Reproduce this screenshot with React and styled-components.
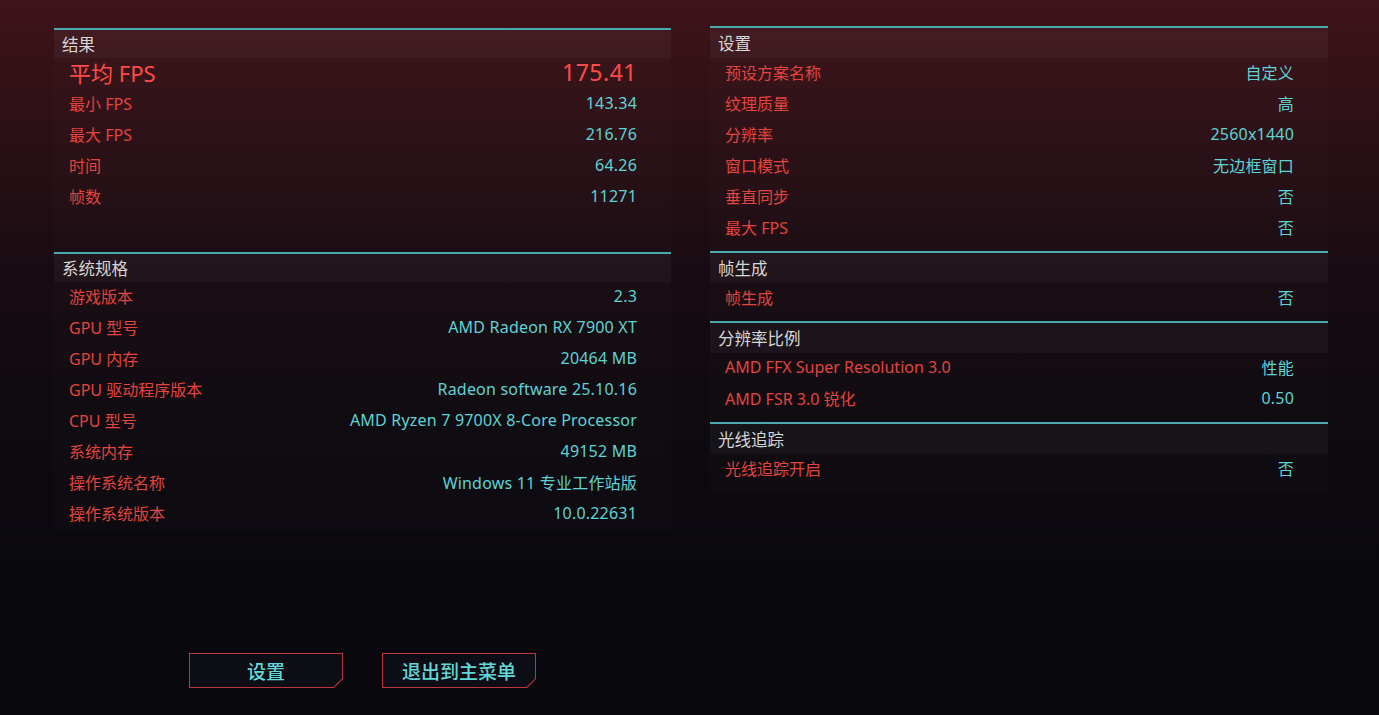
import React from "react";
import styled, { createGlobalStyle } from "styled-components";

const GlobalStyle = createGlobalStyle`
  html, body {
    margin: 0;
    padding: 0;
    background: #08080d;
  }
  body {
    font-family: "Noto Sans", "Noto Sans CJK SC", sans-serif;
  }
`;

const results = [
  { label: "最小 FPS", value: "143.34" },
  { label: "最大 FPS", value: "216.76" },
  { label: "时间", value: "64.26" },
  { label: "帧数", value: "11271" },
];

const system = [
  { label: "游戏版本", value: "2.3" },
  { label: "GPU 型号", value: "AMD Radeon RX 7900 XT" },
  { label: "GPU 内存", value: "20464 MB" },
  { label: "GPU 驱动程序版本", value: "Radeon software 25.10.16" },
  { label: "CPU 型号", value: "AMD Ryzen 7 9700X 8-Core Processor" },
  { label: "系统内存", value: "49152 MB" },
  { label: "操作系统名称", value: "Windows 11 专业工作站版" },
  { label: "操作系统版本", value: "10.0.22631" },
];

const settingsGroups = [
  {
    title: "设置",
    rows: [
      { label: "预设方案名称", value: "自定义" },
      { label: "纹理质量", value: "高" },
      { label: "分辨率", value: "2560x1440" },
      { label: "窗口模式", value: "无边框窗口" },
      { label: "垂直同步", value: "否" },
      { label: "最大 FPS", value: "否" },
    ],
  },
  { title: "帧生成", rows: [{ label: "帧生成", value: "否" }] },
  {
    title: "分辨率比例",
    rows: [
      { label: "AMD FFX Super Resolution 3.0", value: "性能" },
      { label: "AMD FSR 3.0 锐化", value: "0.50" },
    ],
  },
  { title: "光线追踪", rows: [{ label: "光线追踪开启", value: "否" }] },
];

const Row = ({ label, value, big }) => (
  <RowWrap>
    <Label $big={big}>{label}</Label>
    <Value $big={big}>{value}</Value>
  </RowWrap>
);

const App = () => {
  return (
    <>
      <GlobalStyle />
      <Page>
        <LeftColumn>
          <Section $minHeight={224}>
            <Title>结果</Title>
            <Row label="平均 FPS" value="175.41" big />
            {results.map((r) => (
              <Row key={r.label} {...r} />
            ))}
          </Section>
          <Section>
            <Title>系统规格</Title>
            {system.map((r) => (
              <Row key={r.label} {...r} />
            ))}
          </Section>
        </LeftColumn>
        <RightColumn>
          {settingsGroups.map((g) => (
            <Section key={g.title} $pad>
              <Title $tall>{g.title}</Title>
              {g.rows.map((r) => (
                <Row key={r.label} {...r} />
              ))}
            </Section>
          ))}
        </RightColumn>
        <Footer>
          <CutButton>
            <ButtonText>设置</ButtonText>
          </CutButton>
          <CutButton>
            <ButtonText>退出到主菜单</ButtonText>
          </CutButton>
        </Footer>
      </Page>
    </>
  );
};

const Page = styled.div`
  box-sizing: border-box;
  height: 100vh;
  min-height: 715px;
  padding: 26px 51px 27px 54px;
  display: grid;
  grid-template-columns: 617px 618px;
  grid-template-rows: 1fr auto;
  column-gap: 39px;
  background: linear-gradient(
    180deg,
    #3e141a 0%,
    #2c1016 18%,
    #180c12 38%,
    #0d0a10 60%,
    #08080d 100%
  );
`;

const LeftColumn = styled.div`
  display: flex;
  flex-direction: column;
  padding-top: 2px;
`;

const RightColumn = styled.div`
  display: flex;
  flex-direction: column;
`;

const Section = styled.div`
  box-sizing: border-box;
  border-top: 2px solid #4aa9ab;
  background: rgba(255, 255, 255, 0.01);
  min-height: ${({ $minHeight }) => ($minHeight ? `${$minHeight}px` : "0")};
  padding-bottom: ${({ $pad }) => ($pad ? "7px" : "0")};
`;

const Title = styled.div`
  box-sizing: border-box;
  height: ${({ $tall }) => ($tall ? "30px" : "28px")};
  display: flex;
  align-items: center;
  padding: 0 8px 1px;
  background: rgba(255, 255, 255, 0.03);
  color: #d6d6d6;
  font-size: 16.5px;
`;

const RowWrap = styled.div`
  box-sizing: border-box;
  height: 31px;
  display: flex;
  align-items: center;
  justify-content: space-between;
  padding: 0 34px 3px 15px;
`;

const Label = styled.span`
  color: ${({ $big }) => ($big ? "#ff4b47" : "#e2443e")};
  font-size: ${({ $big }) => ($big ? "22px" : "16px")};
  white-space: nowrap;
`;

const Value = styled.span`
  color: ${({ $big }) => ($big ? "#ff4b47" : "#5fd3d5")};
  font-size: ${({ $big }) => ($big ? "23px" : "16px")};
  letter-spacing: ${({ $big }) => ($big ? "0.5px" : "0.2px")};
  white-space: nowrap;
`;

const Footer = styled.div`
  grid-column: 1;
  display: flex;
  justify-content: center;
  gap: 39px;
`;

const CutButton = styled.button`
  position: relative;
  width: 154px;
  height: 35px;
  border: none;
  padding: 0;
  background: #c0343c;
  cursor: pointer;
  clip-path: polygon(0 0, 100% 0, 100% calc(100% - 9px), calc(100% - 9px) 100%, 0 100%);

  &::before {
    content: "";
    position: absolute;
    inset: 1px;
    background: #0c0d15;
    clip-path: polygon(0 0, 100% 0, 100% calc(100% - 8.5px), calc(100% - 8.5px) 100%, 0 100%);
  }
`;

const ButtonText = styled.span`
  position: relative;
  color: #62d8d8;
  font-family: "Noto Sans", "Noto Sans CJK SC", sans-serif;
  font-size: 19px;
  font-weight: 500;
`;

export default App;
